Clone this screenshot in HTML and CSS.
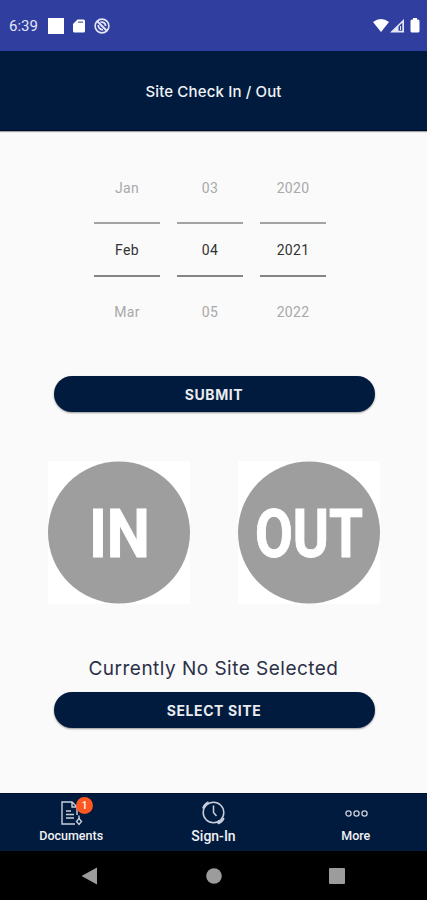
FILE: index.html
```
<!DOCTYPE html>
<html lang="en">
<head>
  <meta charset="UTF-8" />
  <meta name="viewport" content="width=device-width, initial-scale=1" />
  <title>Site Check In / Out</title>
  <link rel="stylesheet" href="styles.css">
</head>
<body>
  <div class="status-bar">
    <span class="time">6:39</span>
    <span class="square"></span>
    <svg class="sd" width="12" height="14" viewBox="0 0 12 14">
      <path d="M4.5 .5H10.500Q12 .5 12 2V12Q12 13.500 10.500 13.500H1.500Q0 13.500 0 12V5Z" fill="#fff"/>
      <path d="M5 3.200H10" stroke="#7780c4" stroke-width="1.600"/>
    </svg>
    <svg class="sync" width="16" height="16" viewBox="0 0 16 16" fill="none" stroke="#e4e6f6">
      <circle cx="8" cy="8" r="6.900" stroke-width="1.600"/>
      <path d="M3 3L13 13" stroke-width="2"/>
      <path d="M6.500 4.200Q11 3.500 11.700 8M4.200 7Q4.500 11.500 9 11.800" stroke-width="1.800"/>
    </svg>
    <svg class="signals" width="48" height="16" viewBox="0 0 48 16">
      <path d="M0 4Q8 -2 16 4L8 14Z" fill="#fff"/>
      <path d="M17 14.500L31 1V14.500Z" fill="#e4e6f6"/>
      <path d="M25.500 8.500L29.300 4.800V12.800H25.500Z" fill="#303f9f"/>
      <path d="M27.500 8V12" stroke="#e4e6f6"/>
      <path d="M40 1.500V0H44V1.500H45Q46.500 1.500 46.500 3V13Q46.500 14.500 45 14.500H39Q37.500 14.500 37.500 13V3Q37.500 1.500 39 1.500Z" fill="#fff"/>
    </svg>
  </div>

  <header class="header">
    <h1>Site Check In / Out</h1>
  </header>

  <main>
    <div class="date-picker">
      <div class="wheel">
        <span>Jan</span>
        <span class="selected">Feb</span>
        <span>Mar</span>
      </div>
      <div class="wheel">
        <span>03</span>
        <span class="selected">04</span>
        <span>05</span>
      </div>
      <div class="wheel">
        <span>2020</span>
        <span class="selected">2021</span>
        <span>2022</span>
      </div>
    </div>

    <button class="btn">SUBMIT</button>

    <div class="check-row">
      <svg class="check" viewBox="0 0 142 142">
        <circle cx="71" cy="71" r="71"/>
        <text x="41" y="95.500" textLength="61" lengthAdjust="spacingAndGlyphs">IN</text>
      </svg>
      <svg class="check" viewBox="0 0 142 142">
        <circle cx="71" cy="71" r="71"/>
        <text x="17" y="95.500" textLength="108" lengthAdjust="spacingAndGlyphs">OUT</text>
      </svg>
    </div>

    <p class="site-name">Currently No Site Selected</p>
    <button class="btn">SELECT SITE</button>
  </main>

  <nav class="tabs">
    <a class="tab">
      <span class="icon">
        <svg width="24" height="26" viewBox="0 0 24 26" fill="none" stroke="#c9cedb" stroke-width="1.400">
          <path d="M18 15V7L13 2H3V24H16M13 2V7H18"/>
          <path d="M7 11H12M7 14.500H15M7 18H15"/>
          <path d="M20 15.500V19"/>
          <path d="M20 18.500L22.500 21.500L20 24.500L17.500 21.500Z"/>
        </svg>
        <span class="badge">1</span>
      </span>
      <span>Documents</span>
    </a>
    <a class="tab sign-in">
      <span class="icon">
        <svg width="26" height="26" viewBox="0 0 26 26" fill="none" stroke="#c9cedb" stroke-width="1.500">
          <circle cx="13.500" cy="12.500" r="10.300"/>
          <path d="M13.500 5.500V12.500L16.500 16"/>
          <path d="M3 8.500Q4.500 4 8.500 2.200M17.500 23.500L19 20.500M18 23.500Q22 22 23.800 18" stroke-width="2"/>
        </svg>
      </span>
      <span>Sign-In</span>
    </a>
    <a class="tab">
      <span class="icon">
        <svg width="24" height="26" viewBox="0 0 24 26" fill="none" stroke="#c9cedb" stroke-width="1.300">
          <circle cx="4.500" cy="13.500" r="2.600"/>
          <circle cx="12.500" cy="13.500" r="2.600"/>
          <circle cx="20.500" cy="13.500" r="2.600"/>
        </svg>
      </span>
      <span>More</span>
    </a>
  </nav>

  <div class="system-nav">
    <svg width="18" height="18" viewBox="0 0 18 18"><path d="M.5 9L16 .5V17.500Z"/></svg>
    <svg width="18" height="18" viewBox="0 0 18 18"><circle cx="9" cy="9" r="7.800"/></svg>
    <svg width="18" height="18" viewBox="0 0 18 18"><rect x="1" y="1" width="16" height="16" rx="1"/></svg>
  </div>
</body>
</html>
```
FILE: styles.css
```
* {
  box-sizing: border-box;
}
body {
  margin: 0;
  height: 100vh;
  display: flex;
  flex-direction: column;
  background: #fafafa;
  font-family: Roboto, sans-serif;
  overflow: hidden;
}
.status-bar {
  height: 51px;
  padding: 1px 6px 0 9px;
  display: flex;
  align-items: center;
  background: #303f9f;
  color: #e4e6f6;
  font-size: 15px;
}
.time {
  width: 39px;
}
.square {
  width: 16px;
  height: 16px;
  background: #fff;
}
.sd {
  margin-left: 9px;
}
.sync {
  margin-left: 9px;
}
.signals {
  margin-left: auto;
}
.header {
  height: 80px;
  padding-top: 2px;
  display: flex;
  align-items: center;
  justify-content: center;
  background: #001b3d;
  border-bottom: 1px solid #000b2c;
  box-shadow: 0 1px 1px rgba(0, 0, 0, 0.35);
}
h1 {
  margin: 0;
  color: #f2f3f7;
  font-family: Inter, sans-serif;
  font-size: 15px;
  font-weight: 500;
  letter-spacing: 0.15px;
}
main {
  flex: 1;
  display: flex;
  flex-direction: column;
  align-items: center;
  padding-top: 30px;
}
.date-picker {
  display: flex;
  gap: 17px;
  margin-right: 7px;
}
.wheel {
  width: 66px;
  display: flex;
  flex-direction: column;
  color: #a9a9a9;
  font-size: 14px;
  letter-spacing: 0.3px;
  line-height: 55px;
  text-align: center;
}
.wheel span {
  height: 61px;
}
.wheel span:last-child {
  line-height: 70px;
}
.wheel .selected {
  height: 55px;
  line-height: 53px;
  border-top: 2px solid #a2a2a2;
  border-bottom: 2px solid #858585;
  color: #333;
}
.btn {
  width: 321px;
  height: 36px;
  margin-left: 1px;
  padding: 0;
  border: none;
  border-radius: 18px;
  background: #001b3d;
  box-shadow: 0 1px 2px rgba(0, 0, 0, 0.4);
  color: #e9ebf0;
  font-family: Inter, sans-serif;
  font-size: 14px;
  font-weight: 700;
  letter-spacing: 0.6px;
}
.date-picker + .btn {
  margin-top: 38px;
}
.check-row {
  display: flex;
  gap: 48px;
  margin-top: 49px;
}
.check {
  width: 142px;
  height: 143px;
  background: #fff;
  overflow: visible;
}
.check circle {
  fill: #9e9e9e;
}
.check text {
  fill: #fff;
  stroke: #fff;
  stroke-width: 1;
  font-size: 67px;
  font-weight: 700;
}
.site-name {
  margin: 52px 0 11px;
  color: #2c3048;
  font-family: Inter, sans-serif;
  font-size: 19px;
  letter-spacing: 0.48px;
  line-height: 25px;
}
.tabs {
  height: 58px;
  display: flex;
  background: #001b3d;
  border-top: 1px solid #000f2e;
}
.tab {
  flex: 1;
  display: flex;
  flex-direction: column;
  align-items: center;
  padding-top: 6px;
  color: #f0f1f5;
  font-size: 12.5px;
  font-weight: 500;
  line-height: 20px;
}
.sign-in {
  font-size: 14px;
}
.icon {
  position: relative;
  height: 26px;
}
.icon svg {
  display: block;
}
.badge {
  position: absolute;
  top: -3px;
  right: -10px;
  width: 17px;
  height: 17px;
  border-radius: 50%;
  background: #ff5722;
  color: #fff;
  font-size: 10px;
  line-height: 17px;
  text-align: center;
}
.system-nav {
  height: 49px;
  padding: 0 81px;
  display: flex;
  align-items: center;
  justify-content: space-between;
  background: #000;
  fill: #9c9c9c;
}
```
